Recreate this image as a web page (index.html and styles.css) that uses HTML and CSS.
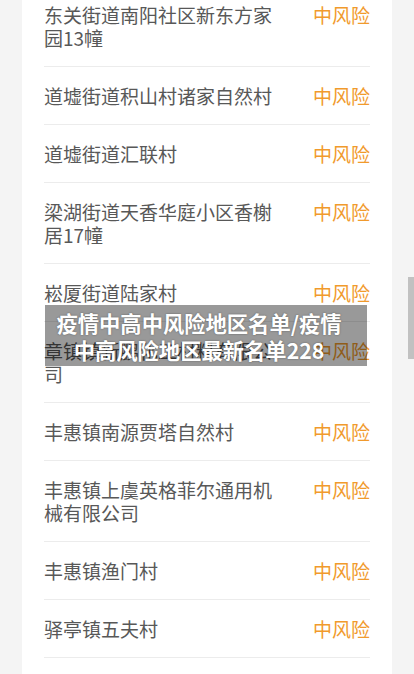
FILE: index.html
```html
<!DOCTYPE html>
<html lang="zh-CN">
<head>
<meta charset="utf-8">
<title>疫情中高中风险地区名单</title>
<link rel="stylesheet" href="styles.css">
</head>
<body>
<div class="card">
  <div class="row"><div class="name">东关街道南阳社区新东方家园13幢</div><div class="risk">中风险</div></div>
  <div class="row"><div class="name">道墟街道积山村诸家自然村</div><div class="risk">中风险</div></div>
  <div class="row"><div class="name">道墟街道汇联村</div><div class="risk">中风险</div></div>
  <div class="row"><div class="name">梁湖街道天香华庭小区香榭居17幢</div><div class="risk">中风险</div></div>
  <div class="row"><div class="name">崧厦街道陆家村</div><div class="risk">中风险</div></div>
  <div class="row"><div class="name">章镇镇新鹏化工材料有限公司</div><div class="risk">中风险</div></div>
  <div class="row"><div class="name">丰惠镇南源贾塔自然村</div><div class="risk">中风险</div></div>
  <div class="row"><div class="name">丰惠镇上虞英格菲尔通用机械有限公司</div><div class="risk">中风险</div></div>
  <div class="row"><div class="name">丰惠镇渔门村</div><div class="risk">中风险</div></div>
  <div class="row"><div class="name">驿亭镇五夫村</div><div class="risk">中风险</div></div>
</div>
<div class="banner">疫情中高中风险地区名单/疫情中高风险地区最新名单228</div>
<div class="scroll-thumb"></div>
</body>
</html>
```
FILE: styles.css
```css
html, body {
  margin: 0;
  padding: 0;
  background: #f4f4f4;
  height: 674px;
  overflow: hidden;
}
body {
  font-family: "Noto Sans CJK SC", sans-serif;
}
.card {
  background: #ffffff;
  width: 326px;
  margin: -14px 0 0 22px;
  padding: 0 22px 40px;
}
.row {
  display: flex;
  justify-content: space-between;
  align-items: flex-start;
  padding: 17px 0;
  border-bottom: 1px solid #ececec;
  font-size: 19px;
  line-height: 23px;
}
.name {
  flex: 0 1 238px;
  color: #585858;
}
.risk {
  color: #f19a2c;
  white-space: nowrap;
}
.banner {
  position: absolute;
  left: 45px;
  top: 305px;
  width: 292px;
  height: 54px;
  padding: 4px 22px 3px 8px;
  background: rgba(0, 0, 0, 0.4);
  color: #ffffff;
  font-weight: 700;
  font-size: 21.3px;
  line-height: 27px;
  text-align: center;
  text-shadow: 0 0 2px rgba(0, 0, 0, 0.4);
}
.scroll-thumb {
  position: absolute;
  left: 408px;
  top: 277px;
  width: 6px;
  height: 82px;
  background: #c1c1c1;
}
```
